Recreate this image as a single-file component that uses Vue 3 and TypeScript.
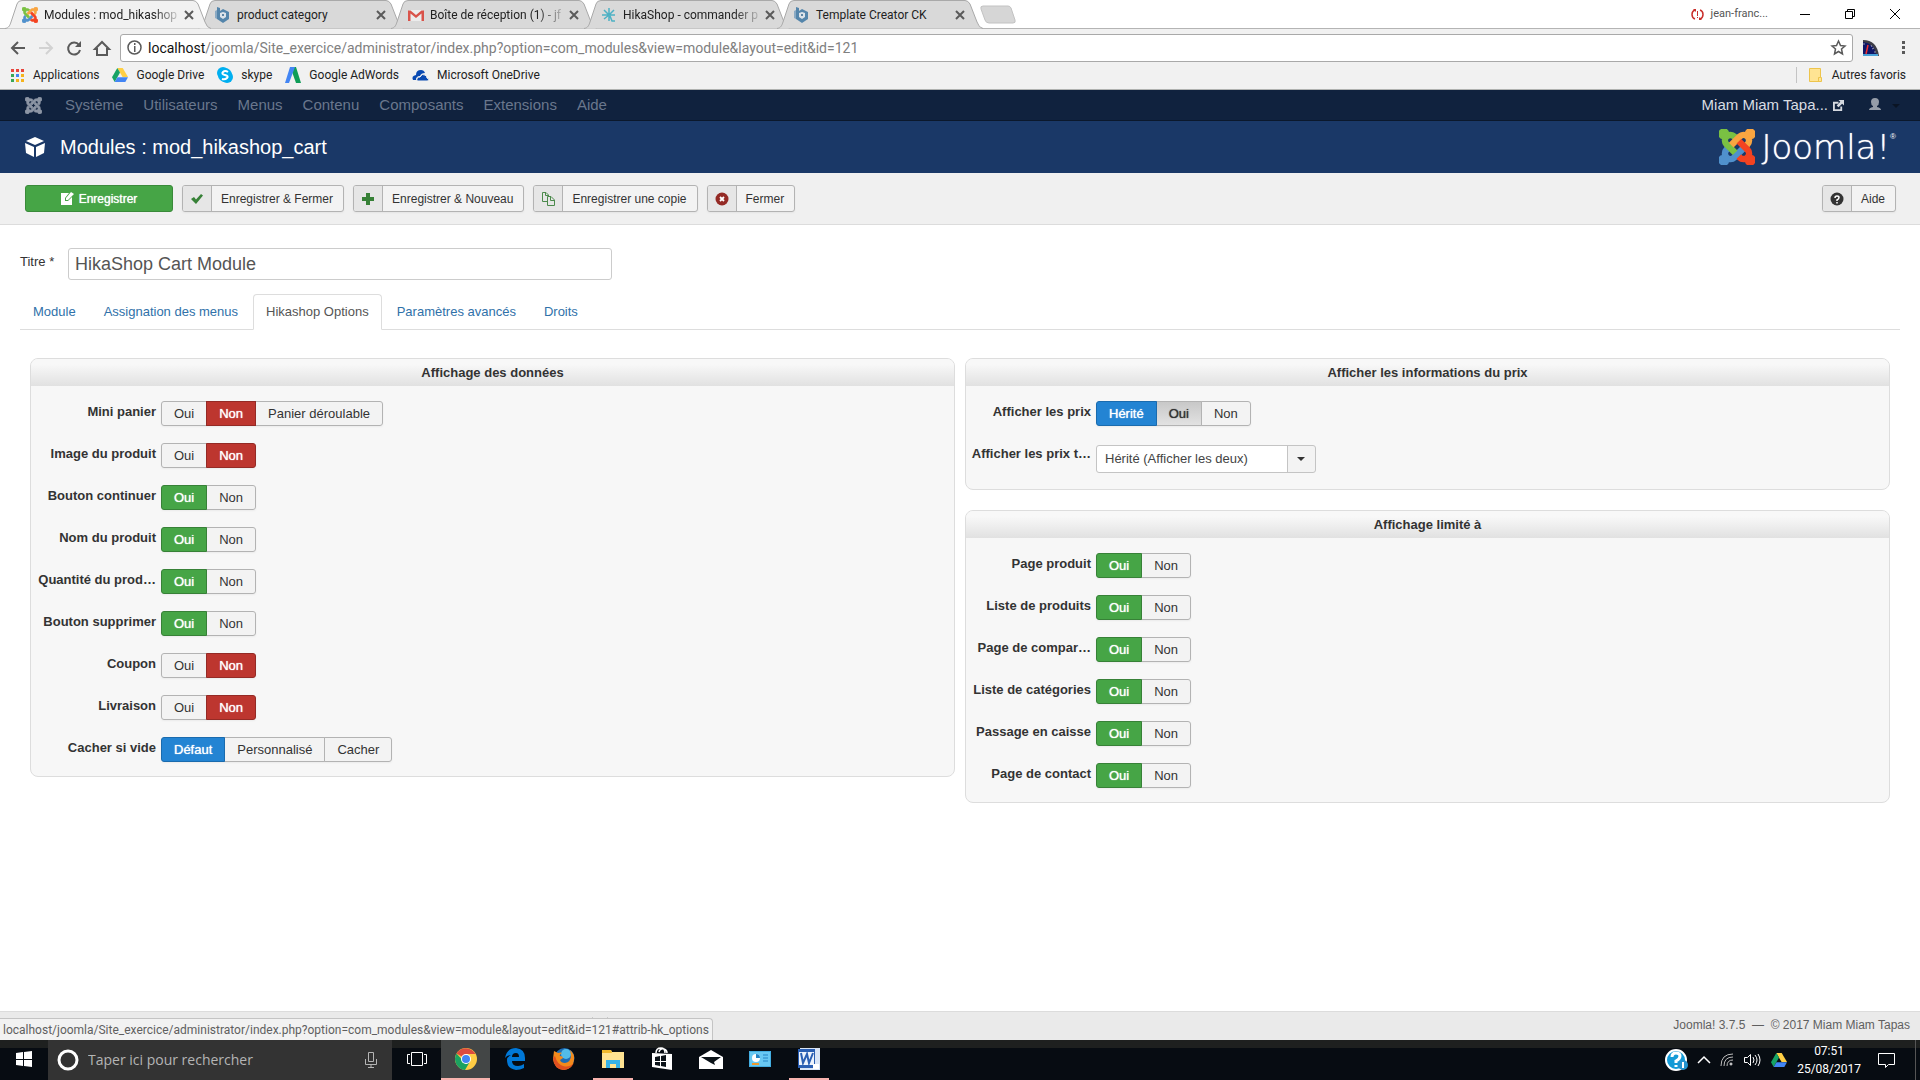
<script setup lang="ts">
import { reactive, ref } from 'vue'

type Tone = 'green' | 'red' | 'blue'
interface Option { text: string; tone: Tone; held?: boolean }
interface Field { id: string; label: string; options: Option[]; value: string }

const oui: Option = { text: 'Oui', tone: 'green' }
const non: Option = { text: 'Non', tone: 'red' }

const dataFields = reactive<Field[]>([
  { id: 'mini', label: 'Mini panier', options: [oui, non, { text: 'Panier déroulable', tone: 'green' }], value: 'Non' },
  { id: 'image', label: 'Image du produit', options: [oui, non], value: 'Non' },
  { id: 'continuer', label: 'Bouton continuer', options: [oui, non], value: 'Oui' },
  { id: 'nom', label: 'Nom du produit', options: [oui, non], value: 'Oui' },
  { id: 'quantite', label: 'Quantité du prod…', options: [oui, non], value: 'Oui' },
  { id: 'supprimer', label: 'Bouton supprimer', options: [oui, non], value: 'Oui' },
  { id: 'coupon', label: 'Coupon', options: [oui, non], value: 'Non' },
  { id: 'livraison', label: 'Livraison', options: [oui, non], value: 'Non' },
  {
    id: 'vide',
    label: 'Cacher si vide',
    options: [{ text: 'Défaut', tone: 'blue' }, { text: 'Personnalisé', tone: 'green' }, { text: 'Cacher', tone: 'green' }],
    value: 'Défaut',
  },
])

const priceFields = reactive<Field[]>([
  {
    id: 'prix',
    label: 'Afficher les prix',
    options: [{ text: 'Hérité', tone: 'blue' }, { text: 'Oui', tone: 'green', held: true }, non],
    value: 'Hérité',
  },
])

const limitFields = reactive<Field[]>(
  ['Page produit', 'Liste de produits', 'Page de compar…', 'Liste de catégories', 'Passage en caisse', 'Page de contact']
    .map((label, i) => ({ id: 'limite' + i, label, options: [oui, non], value: 'Oui' })),
)

const title = ref('HikaShop Cart Module')
const taxMode = ref('inherit')

const browserTabs = [
  { icon: 'joomla', text: 'Modules : mod_hikashop', fade: true },
  { icon: 'ck', text: 'product category', fade: false },
  { icon: 'gmail', text: 'Boîte de réception (1) - jf', fade: true },
  { icon: 'hika', text: 'HikaShop - commander p', fade: true },
  { icon: 'ck', text: 'Template Creator CK', fade: false },
]
const menus = ['Système', 'Utilisateurs', 'Menus', 'Contenu', 'Composants', 'Extensions', 'Aide']
const tools = [
  { icon: 'check', text: 'Enregistrer & Fermer' },
  { icon: 'plus', text: 'Enregistrer & Nouveau' },
  { icon: 'copy', text: 'Enregistrer une copie' },
  { icon: 'cancel', text: 'Fermer' },
]
const sections = ['Module', 'Assignation des menus', 'Hikashop Options', 'Paramètres avancés', 'Droits']
</script>

<template>
  <div class="screen">
    <svg class="defs" width="0" height="0" aria-hidden="true">
      <defs>
        <path id="arm" d="M16.7 14.8l-2.5 2.5-2.4 2.4-.4.4c-1.4 1.4-3.3 1.8-5.1 1.4-.3 1.4-1.6 2.5-3.1 2.5C1.400 24 0 22.500 0 20.800c0-1.500 1.100-2.800 2.500-3.100-.4-1.800 0-3.700 1.400-5.100l.2-.2 2.300 2.400-.2.200c-.8.800-.8 2 0 2.800.8.800 2 .800 2.800 0l.5-.5 2.300-2.400 2.500-2.500z" />
        <symbol id="i-joomla" viewBox="0 0 24 24">
          <g stroke-width="1">
            <use href="#arm" fill="#5091cd" stroke="#5091cd" />
            <use href="#arm" fill="#7ac143" stroke="#7ac143" transform="rotate(90 12 12)" />
            <use href="#arm" fill="#f9a541" stroke="#f9a541" transform="rotate(180 12 12)" />
            <use href="#arm" fill="#f44321" stroke="#f44321" transform="rotate(270 12 12)" />
          </g>
        </symbol>
        <symbol id="i-joomla-grey" viewBox="0 0 24 24">
          <g fill="#8c95a4" stroke="#8c95a4">
            <use href="#arm" />
            <use href="#arm" transform="rotate(90 12 12)" />
            <use href="#arm" transform="rotate(180 12 12)" />
            <use href="#arm" transform="rotate(270 12 12)" />
          </g>
        </symbol>
        <symbol id="i-ck" viewBox="0 0 16 16">
          <path d="M2 0l3 1v3l3-2 6 3v7l-6 4-6-4z" fill="#5485ab" />
          <path d="M5 6l3-1 3 1v4l-3 2-3-2z" fill="#dbe3ea" />
          <path d="M0 4l2-1v9l-2-1z" fill="#8aaac4" />
          <circle cx="8" cy="8" r="1" fill="#35678e" />
        </symbol>
        <symbol id="i-gmail" viewBox="0 0 16 16">
          <path d="M1 3h14v11H1z" fill="#ececec" />
          <path d="M0 3.500h2.500L8 8l5.500-4.500H16V14h-2.500V6.500L8 11 2.500 6.500V14H0z" fill="#d9534a" />
        </symbol>
        <symbol id="i-hika" viewBox="0 0 16 16">
          <path d="M8 8V1M8 8l5-5M8 8L3 3M8 8H1M8 8h6M8 8l-5 4M8 8v6M9 9l2 5h3" fill="none" stroke="#4db1c4" stroke-width="1.500" />
        </symbol>
        <symbol id="i-drive" viewBox="0 0 16 14">
          <path d="M5.300 0h5.400L16 9h-5.400z" fill="#ffcf45" />
          <path d="M5.300 0L8 4.600 2.700 14 0 9.300z" fill="#16a365" />
          <path d="M5.500 9.300H16L13.300 14H2.700z" fill="#4285f4" />
        </symbol>
        <symbol id="i-check" viewBox="0 0 14 14"><path d="M1 7l3-2 2 2.500L11 2l2 1.500L6 12z" fill="#378137" /></symbol>
        <symbol id="i-plus" viewBox="0 0 14 14"><path d="M5 1h4v4h4v4H9v4H5V9H1V5h4z" fill="#378137" /></symbol>
        <symbol id="i-copy" viewBox="0 0 14 14">
          <path d="M6 9.500H1.500v-9H5L7.500 3v1M4.500.500V3.500h3M6.500 4.500H10l3.500 3.500v5.500h-7zM9.500 4.500v4h4" fill="none" stroke="#4c8a4c" />
        </symbol>
        <symbol id="i-cancel" viewBox="0 0 14 14">
          <circle cx="7" cy="7" r="6.500" fill="#942a25" />
          <path d="M5 5l4 4M9 5L5 9" stroke="#fff" stroke-width="1.800" />
        </symbol>
      </defs>
    </svg>

    <header class="browser">
      <div class="strip">
        <div class="tabs" role="tablist">
          <button v-for="(t, i) in browserTabs" :key="i" class="btab" :class="{ on: i === 0 }" role="tab">
            <svg class="shape" viewBox="0 0 206 29" aria-hidden="true">
              <path d="M0 28.500C4 28 5 25 6 22L12 4Q13 .5 17 .5H188Q191 .5 193 4L200 22Q202 28 206 28.500" />
            </svg>
            <svg class="fav"><use :href="'#i-' + t.icon" /></svg>
            <span class="name" :class="{ fade: t.fade }">{{ t.text }}</span>
            <svg class="x" viewBox="0 0 8 8"><path d="M0 0l8 8M8 0L0 8" stroke="#5a5a5a" stroke-width="2" /></svg>
          </button>
          <button class="newtab" aria-label="Nouvel onglet">
            <svg viewBox="0 0 36 19"><path d="M3 1h25q2 0 3 2l4 12q1 3-2 3H9q-3 0-4-3L1 4q-1-3 2-3z" fill="#d6d6d6" stroke="#c2c2c2" /></svg>
          </button>
        </div>
        <div class="window">
          <svg width="13" height="11" viewBox="0 0 13 11"><path d="M4 1Q1 2 1 5.500T4 10M9 1q3 1 3 4.500T9 10" fill="none" stroke="#c9302c" stroke-width="1.500" /><path d="M2 0h3v3zM8 11h3L8 8zM6 2h1v5H6zM6 8h1v1H6z" fill="#c9302c" /></svg>
          <span class="profile">jean-franc...</span>
          <button aria-label="Réduire"><svg width="10" height="10"><path d="M0 5.500h10" stroke="#000" /></svg></button>
          <button aria-label="Restaurer"><svg width="10" height="10" fill="none" stroke="#000"><path d="M.5 2.500h7v7h-7zM2.500 2.500v-2h7v7h-2" /></svg></button>
          <button aria-label="Fermer la fenêtre"><svg width="10" height="10"><path d="M0 0l10 10M10 0L0 10" stroke="#000" /></svg></button>
        </div>
      </div>
      <div class="address">
        <button aria-label="Retour"><svg viewBox="0 0 16 16"><path d="M15 8H2M8 2L2 8l6 6" fill="none" stroke="#5a5a5a" stroke-width="2" /></svg></button>
        <button aria-label="Suivant"><svg viewBox="0 0 16 16"><path d="M1 8h13M8 2l6 6-6 6" fill="none" stroke="#d2d2d2" stroke-width="2" /></svg></button>
        <button aria-label="Actualiser"><svg viewBox="0 0 16 16"><path d="M13 5a6 6 0 1 0 1 5" fill="none" stroke="#5a5a5a" stroke-width="2" /><path d="M15 1v6H9z" fill="#5a5a5a" /></svg></button>
        <button class="home" aria-label="Accueil"><svg viewBox="0 0 16 16"><path d="M1 9l7-7 7 7h-2v6H3V9z" fill="none" stroke="#5a5a5a" stroke-width="2" /></svg></button>
        <div class="url">
          <svg width="15" height="15" viewBox="0 0 15 15"><circle cx="7.500" cy="7.500" r="6.500" fill="none" stroke="#5a5a5a" stroke-width="1.500" /><path d="M7 3h1.500v2H7zM7 6h1.500v6H7z" fill="#5a5a5a" /></svg>
          <span class="link"><b>localhost</b>/joomla/Site_exercice/administrator/index.php?option=com_modules&amp;view=module&amp;layout=edit&amp;id=121</span>
          <svg width="15" height="15" viewBox="0 0 15 15"><path d="M7.500 1l2 4.500 4.500.5-3.500 3 1 5-4-2.500-4 2.500 1-5L1 6l4.500-.5z" fill="none" stroke="#5a5a5a" stroke-width="1.500" /></svg>
        </div>
        <svg class="gauge" width="16" height="16" viewBox="0 0 16 16"><path d="M0 0q14 0 16 16H0z" fill="#3c3c46" /><path d="M0 2q11 1 13 12H0z" fill="#0e1668" /><path d="M0 14h15v2H0z" fill="#46a0d8" /><path d="M5 5L3 14" stroke="#f03030" stroke-width="1.500" /><path d="M8 5l1 2M11 8l-2 1M1 3v2M13 12h-2" stroke="#99a" /></svg>
        <button class="more" aria-label="Menu"><svg width="4" height="14"><path d="M0 0h3v3H0zM0 5h3v3H0zM0 10h3v3H0z" fill="#5a5a5a" /></svg></button>
      </div>
      <nav class="bookmarks">
        <a href="#"><svg width="14" height="14" viewBox="0 0 14 14"><path d="M0 1h3v3H0zM5 1h3v3H5zM10 1h3v3h-3z" fill="#e8453c" /><path d="M0 6h3v3H0z" fill="#3aa757" /><path d="M5 6h3v3H5z" fill="#4285f4" /><path d="M10 6h3v3h-3zM5 11h3v3H5zM10 11h3v3h-3z" fill="#f5b31c" /><path d="M0 11h3v3H0z" fill="#3aa757" /></svg>Applications</a>
        <a href="#"><svg width="16" height="14"><use href="#i-drive" /></svg>Google Drive</a>
        <a href="#"><svg width="16" height="16" viewBox="0 0 16 16"><circle cx="6" cy="6" r="6" fill="#00aff0" /><circle cx="10" cy="10" r="6" fill="#00aff0" /><circle cx="8" cy="8" r="7" fill="#00aff0" /><path d="M11 5Q8 3 6 5t2 3 2 3-5 1" fill="none" stroke="#fff" stroke-width="2" /></svg>skype</a>
        <a href="#"><svg width="16" height="16" viewBox="0 0 16 16"><path d="M7 0h4l5 16h-5L6 2z" fill="#0f9d58" /><path d="M5 0h5L4 16H0z" fill="#4285f4" /></svg>Google AdWords</a>
        <a href="#"><svg width="17" height="12" viewBox="0 0 17 12"><path d="M1 11q-2-4 3-5 0-5 5-5 3 0 4 3-4 0-5 3-4 0-4 4z" fill="#094ab2" /><path d="M5 12q-1-4 3-4 2-4 5-2 2 1 2 3 3 1 1 3z" fill="#094ab2" stroke="#f1f1f1" /></svg>Microsoft OneDrive</a>
        <a class="others" href="#"><svg width="13" height="14" viewBox="0 0 13 14"><path d="M.5.500h11v9h1v4H.500z" fill="#ffe493" stroke="#edc44c" /><path d="M9.500 13V9.500h2" fill="none" stroke="#edc44c" /></svg>Autres favoris</a>
      </nav>
    </header>

    <nav class="adminbar">
      <a class="brand" href="#" aria-label="Joomla"><svg width="17" height="17"><use href="#i-joomla-grey" /></svg></a>
      <a v-for="m in menus" :key="m" href="#">{{ m }}</a>
      <div class="user">
        <a class="site" href="#">Miam Miam Tapa...
          <svg width="11" height="11" viewBox="0 0 12 12"><path d="M6 3H1v8h8V7" fill="none" stroke="#d5d9e0" stroke-width="2" /><path d="M6 0h6v6l-2-2-4 4-2-2 4-4z" fill="#d5d9e0" /></svg>
        </a>
        <button aria-label="Utilisateur"><svg width="31" height="14" viewBox="0 0 31 14"><path d="M6 0q4 0 4 4 0 3-2 4v1q4 1 4 3H0q0-2 4-3V8Q2 7 2 4q0-4 4-4z" fill="#959da9" /><path d="M23 6h8l-4 4z" fill="#0a1424" /></svg></button>
      </div>
    </nav>

    <div class="titlebar">
      <svg width="20" height="20" viewBox="0 0 20 20"><path d="M10 0l9 4-9 4-9-4zM0 6l9 4v10l-8-4zM20 6l-9 4v10l8-4z" fill="#fff" /></svg>
      <h1>Modules : mod_hikashop_cart</h1>
      <div class="logo">
        <svg width="36" height="36"><use href="#i-joomla" /></svg>
        <span>Joomla!</span><sup>®</sup>
      </div>
    </div>

    <div class="toolbar">
      <button class="save">
        <svg width="13" height="13" viewBox="0 0 13 13"><path d="M0 1h8L4 6v3h3l4-4v8H0z" fill="#fff" /><path d="M5 8V6l5-6 3 2-6 6z" fill="#fff" /></svg>
        Enregistrer
      </button>
      <button v-for="t in tools" :key="t.text" class="tool"><span class="ico"><svg width="14" height="14"><use :href="'#i-' + t.icon" /></svg></span><span class="txt">{{ t.text }}</span></button>
      <button class="tool help"><span class="ico"><svg width="14" height="14" viewBox="0 0 14 14"><circle cx="7" cy="7" r="6.500" fill="#333" /><path d="M5 6q0-2 2-2t2 1.500-2 2.500v1M7 10v1.500" fill="none" stroke="#fff" stroke-width="1.500" /></svg></span><span class="txt">Aide</span></button>
    </div>

    <main>
      <div class="titlefield">
        <label for="titre">Titre *</label>
        <input id="titre" v-model="title" type="text">
      </div>
      <nav class="sections">
        <a v-for="s in sections" :key="s" href="#" :class="{ on: s === 'Hikashop Options' }">{{ s }}</a>
      </nav>
      <div class="columns">
        <div class="column">
          <section class="panel">
            <h2>Affichage des données</h2>
            <div v-for="f in dataFields" :key="f.id" class="row">
              <span :id="f.id" class="lab">{{ f.label }}</span>
              <div class="group" role="radiogroup" :aria-labelledby="f.id">
                <label v-for="o in f.options" :key="o.text" :class="[f.value === o.text && o.tone]">
                  <input v-model="f.value" type="radio" :name="f.id" :value="o.text">{{ o.text }}
                </label>
              </div>
            </div>
          </section>
        </div>
        <div class="column">
          <section class="panel">
            <h2>Afficher les informations du prix</h2>
            <div v-for="f in priceFields" :key="f.id" class="row">
              <span :id="f.id" class="lab">{{ f.label }}</span>
              <div class="group" role="radiogroup" :aria-labelledby="f.id">
                <label v-for="o in f.options" :key="o.text" :class="[f.value === o.text && o.tone, { held: o.held }]">
                  <input v-model="f.value" type="radio" :name="f.id" :value="o.text">{{ o.text }}
                </label>
              </div>
            </div>
            <div class="row drop">
              <label class="lab" for="taxes">Afficher les prix t…</label>
              <div class="select">
                <select id="taxes" v-model="taxMode"><option value="inherit">Hérité (Afficher les deux)</option></select>
                <svg width="8" height="4" viewBox="0 0 8 4"><path d="M0 0h8L4 4z" fill="#333" /></svg>
              </div>
            </div>
          </section>
          <section class="panel">
            <h2>Affichage limité à</h2>
            <div v-for="f in limitFields" :key="f.id" class="row">
              <span :id="f.id" class="lab">{{ f.label }}</span>
              <div class="group" role="radiogroup" :aria-labelledby="f.id">
                <label v-for="o in f.options" :key="o.text" :class="[f.value === o.text && o.tone]">
                  <input v-model="f.value" type="radio" :name="f.id" :value="o.text">{{ o.text }}
                </label>
              </div>
            </div>
          </section>
        </div>
      </div>
    </main>

    <footer class="status">
      <svg width="620" height="8" viewBox="0 0 620 8" aria-hidden="true"><path d="M106 8q1-3 5-3h8q4 0 5 3zM260 8q1-3 5-3h8q4 0 5 3zM385 8q1-3 5-3h8q4 0 5 3z" fill="#8b8b8b" /><path d="M592 5l4 2M608 5l-4 2" stroke="#666" /></svg>
      <span>Joomla! 3.7.5 &nbsp;—&nbsp; © 2017 Miam Miam Tapas</span>
      <div class="bubble">localhost/joomla/Site_exercice/administrator/index.php?option=com_modules&amp;view=module&amp;layout=edit&amp;id=121#attrib-hk_options</div>
    </footer>

    <div class="taskbar">
      <button class="start" aria-label="Démarrer"><svg width="16" height="16" viewBox="0 0 16 16"><path d="M0 2l7-1v7H0zM8 1l8-1v8H8zM0 9h7v6l-7-1zM8 9h8v7l-8-1z" fill="#fff" /></svg></button>
      <div class="search">
        <svg width="22" height="22" viewBox="0 0 22 22"><circle cx="11" cy="11" r="9" fill="none" stroke="#fff" stroke-width="3" /></svg>
        <input type="text" placeholder="Taper ici pour rechercher" aria-label="Taper ici pour rechercher">
        <svg width="12" height="16" viewBox="0 0 12 16"><path d="M3.500.500h5v9h-5zM.500 7v5.500h11V7M6 12.500v3M3 15.500h6" fill="none" stroke="#b5b5b5" /></svg>
      </div>
      <button class="app" aria-label="Vue des tâches"><svg width="20" height="15" viewBox="0 0 20 15"><path d="M4.500.500h11v13h-11zM3 2.500H.500v9H3M17 2.500h2.500v9H17" fill="none" stroke="#fff" /></svg></button>
      <button class="app current" aria-label="Chrome"><svg width="22" height="22" viewBox="0 0 22 22"><circle cx="11" cy="11" r="11" fill="#fc4" /><path d="M11 11L1.500 5.500A11 11 0 0 1 20.500 6H11z" fill="#dd4b3e" /><path d="M1.500 5.500A11 11 0 0 0 10 22l5-8.500-4 2.500z" fill="#1ba261" /><circle cx="11" cy="11" r="5" fill="#fff" /><circle cx="11" cy="11" r="4" fill="#4285f4" /></svg></button>
      <button class="app" aria-label="Edge"><svg width="20" height="22" viewBox="0 0 20 22"><path d="M0 10Q2 0 11 0q9 1 9 10v3H7q0 5 6 5 3 0 6-2v4q-4 2-8 2-9-1-9-10 0-3 4-5-4 0-6 3zM7 9h7q0-4-3-4-4 0-4 4z" fill="#0078d7" /></svg></button>
      <button class="app" aria-label="Firefox"><svg width="22" height="22" viewBox="0 0 22 22"><circle cx="11.500" cy="10" r="10" fill="#1e6cb4" /><circle cx="13" cy="6" r="5" fill="#52bce8" /><path d="M1 3l4 2q3-1 4 0-3 2-2 3 3 0 3 2l-3 2q1 3 5 3 6-1 6-8l-1-5q5 4 4 10-1 9-10 10Q1 21 0 11z" fill="#f28a1c" /><path d="M0 10q1 11 10 12 7 0 11-7-5 5-11 3T2 8z" fill="#df5020" /></svg></button>
      <button class="app open" aria-label="Explorateur"><svg width="22" height="19" viewBox="0 0 22 19"><path d="M0 0h9l1 2h12v16H0z" fill="#ffe391" /><path d="M0 0h9l1 3H0z" fill="#f0b92e" /><path d="M4 10h14v8h-4v-4H8v4H4z" fill="#37b2e6" /></svg></button>
      <button class="app" aria-label="Store"><svg width="22" height="24" viewBox="0 0 22 24"><path d="M1 6l20 1v16L1 20z" fill="#fff" /><path d="M5 6Q5 1 10 1q4 0 4 5M8 5q1-4 5-3 3 1 3 4" fill="none" stroke="#fff" stroke-width="1.500" /><path d="M4 10l5-1v5H4zM10 9l5-1v6h-5zM4 15h5v4l-5-1zM10 15h5v5l-5-1z" fill="#0b1218" /></svg></button>
      <button class="app" aria-label="Courrier"><svg width="24" height="19" viewBox="0 0 24 19"><path d="M0 7l12-7 12 7v12H0z" fill="#fff" /><path d="M2 7h20l-7 5 1 3-4-2z" fill="#0b1218" /></svg></button>
      <button class="app" aria-label="Panneau de configuration"><svg width="22" height="16" viewBox="0 0 22 16"><path d="M0 0h22v16H0z" fill="#43aee2" /><path d="M1 1h20v14H1z" fill="#68c8f2" /><circle cx="7" cy="7" r="4" fill="#fff" /><path d="M7 7V3a4 4 0 0 1 4 4z" fill="#2384c6" /><path d="M14 4h5M14 7h5M14 10h5" stroke="#2384c6" /><path d="M3 13h7" stroke="#ee9a2e" stroke-width="2" /></svg></button>
      <button class="app open" aria-label="Word"><svg width="22" height="22" viewBox="0 0 22 22"><path d="M2 0h20v22H2z" fill="#d9e5f6" /><path d="M0 1h17v19H0z" fill="#2a5fb3" /><path d="M1 4h15v13H1z" fill="#edf3fc" /><path d="M3 5l2 10 4-9 2 9 4-10" fill="none" stroke="#2a5fb3" stroke-width="2" /><path d="M15 16h6v5h-6z" fill="#fff" /></svg></button>
      <div class="tray">
        <svg width="23" height="22" viewBox="0 0 23 22"><circle cx="11" cy="11" r="10" fill="#149bd7" stroke="#fff" stroke-width="2" /><path d="M7 8q0-4 4-4t4 3-4 5v2M11 16v2" fill="none" stroke="#fff" stroke-width="3" /><circle cx="18" cy="16" r="5" fill="#2493ce" /><path d="M18 13v6" stroke="#fff" stroke-width="2" /></svg>
        <svg width="12" height="8" viewBox="0 0 12 8"><path d="M0 7l6-6 6 6" fill="none" stroke="#fff" stroke-width="1.500" /></svg>
        <svg width="14" height="14" viewBox="0 0 14 14" fill="none" stroke="#bbb"><path d="M1 13Q1 1 13 1M4 13q0-9 9-9M7 13q0-6 6-6" /><circle cx="11" cy="11" r="1" stroke="#fff" /></svg>
        <svg width="17" height="14" viewBox="0 0 17 14" fill="none" stroke="#fff"><path d="M.500 4.500h3l3-3v11l-3-3h-3zM9 4q2 3 0 6M11 2q4 5 0 10M14 1q4 6 0 12" /></svg>
        <svg width="16" height="14"><use href="#i-drive" /></svg>
        <div class="clock"><span>07:51</span><span>25/08/2017</span></div>
        <svg width="17" height="17" viewBox="0 0 17 17"><path d="M.500 1.500h16v11h-6l-3 3v-3h-7z" fill="none" stroke="#fff" /></svg>
      </div>
    </div>
  </div>
</template>

<style>
body { margin: 0; background: #fff; }
</style>

<style scoped>
.screen { display: flex; flex-direction: column; min-height: 100vh; font: 13px/18px "Liberation Sans", Arial, sans-serif; color: #333; }
.defs { position: absolute; }
* { box-sizing: border-box; }
svg { display: block; flex: none; overflow: visible; }
a { text-decoration: none; color: inherit; }
button { font: inherit; color: inherit; border: 0; padding: 0; background: none; }

.browser { font: 12px/16px Roboto, "Open Sans", sans-serif; background: #f1f1f1; border-bottom: 1px solid #b0b2b0; color: #222; }
.strip { display: flex; justify-content: space-between; height: 29px; background: #fff; border-bottom: 1px solid #b4b4b4; }
.tabs { display: flex; padding-left: 5px; }
.btab { position: relative; display: flex; align-items: center; width: 206px; height: 29px; margin-right: -13px; padding: 0 15px 0 17px; gap: 6px; text-align: left; }
.btab .shape { position: absolute; left: 0; top: 0; width: 206px; height: 29px; fill: #d9d9d9; stroke: #a9a9a9; }
.btab.on { z-index: 1; }
.btab.on .shape { fill: #f1f1f1; }
.fav { position: relative; width: 16px; height: 16px; }
.name { position: relative; flex: 1; white-space: nowrap; }
.name.fade { mask-image: linear-gradient(to right, #000 82%, #0003); }
.x { position: relative; width: 8px; height: 8px; margin: 0 4px 0 2px; }
.newtab { align-self: center; margin-left: 10px; }
.newtab svg { width: 36px; height: 19px; }
.window { display: flex; align-items: center; padding-right: 20px; }
.profile { margin: 0 32px 0 7px; font-size: 11px; color: #555; }
.window button + button { margin-left: 35px; }
.address { display: flex; align-items: center; height: 37px; padding: 0 14px 0 10px; }
.address > button svg { width: 16px; height: 16px; }
.address > button { margin-right: 12px; }
.address > .home { margin-right: 10px; }
.url { display: flex; align-items: center; flex: 1; height: 28px; padding: 0 6px; background: #fff; border: 1px solid #a9a9a9; border-radius: 3px; }
.link { flex: 1; margin-left: 6px; font-size: 14px; color: #808080; white-space: nowrap; }
.link b { font-weight: 400; color: #111; }
.gauge { margin: 0 23px 0 10px; }
.address > .more { margin: 0; }
.address > .more svg { width: 4px; height: 14px; }
.bookmarks { display: flex; align-items: center; height: 23px; padding: 0 14px 6px 11px; gap: 13px; }
.bookmarks a { display: flex; align-items: center; gap: 8px; }
.bookmarks .others { margin-left: auto; padding-left: 12px; border-left: 1px solid #c4c4c4; gap: 10px; }

.adminbar { display: flex; align-items: center; height: 31px; padding: 0 20px 0 25px; background: #10223e; border-bottom: 1px solid #0b182c; gap: 20px; font-size: 15px; color: #6a778d; }
.adminbar .brand { margin-right: 3px; }
.user { display: flex; align-items: center; margin-left: auto; gap: 25px; }
.site { display: flex; align-items: center; gap: 5px; color: #d9dde3; }
.titlebar { display: flex; align-items: center; height: 52px; padding: 0 24px 0 25px; background: #1a3867; color: #fff; }
.titlebar h1 { margin: 0 0 0 15px; font-size: 20px; font-weight: 400; line-height: 24px; }
.logo { display: flex; align-items: center; margin-left: auto; gap: 6px; }
.logo span { font: 200 34px/36px "DejaVu Sans", sans-serif; text-shadow: 0 0 1px #fff; }
.logo sup { align-self: flex-start; margin-left: -6px; font-size: 8px; line-height: 16px; }

.toolbar { display: flex; align-items: center; height: 52px; padding: 0 24px 0 25px; background: #f0f0f0; border-bottom: 1px solid #dcdcdc; gap: 9px; font-size: 12px; }
.save { display: flex; align-items: center; justify-content: center; gap: 5px; width: 148px; height: 27px; background: #46a546; border: 1px solid #3a8a3a; border-radius: 3px; color: #fff; text-shadow: 0 0 1px #fff; }
.tool { display: flex; align-items: stretch; height: 27px; border: 1px solid #b3b3b3; border-radius: 3px; background: #f3f3f3; box-shadow: 0 1px 2px #0000000d; overflow: hidden; }
.ico { display: flex; align-items: center; justify-content: center; width: 29px; background: #e6e6e6; border-right: 1px solid #b3b3b3; }
.txt { padding: 0 10px 0 9px; line-height: 26px; }
.help { margin-left: auto; }

main { flex: 1; padding: 23px 20px 0; }
.titlefield { display: flex; align-items: center; }
.titlefield label { width: 48px; padding-bottom: 4px; }
.titlefield input { width: 544px; height: 32px; padding: 0 6px; border: 1px solid #ccc; border-radius: 3px; font: 18px/24px "Liberation Sans", Arial, sans-serif; color: #555; background: #fff; }
.sections { display: flex; margin-top: 14px; border-bottom: 1px solid #ddd; }
.sections a { height: 36px; margin: 0 2px -1px 0; padding: 8px 12px; border: 1px solid transparent; border-radius: 4px 4px 0 0; color: #3071a9; }
.sections .on { border-color: #ddd; border-bottom-color: #fff; background: #fff; color: #555; }
.columns { display: grid; grid-template-columns: 1fr 1fr; align-items: start; gap: 10px; padding: 28px 10px 20px; }
.column { display: flex; flex-direction: column; gap: 20px; }
.panel { padding-bottom: 14px; border: 1px solid #ddd; border-radius: 8px; background: #f7f7f7; overflow: hidden; }
.panel h2 { height: 27px; margin: 0 0 15px; font-size: 13px; line-height: 27px; text-align: center; background: linear-gradient(#f8f8f8 20%, #e1e1e1); }
.row { display: flex; align-items: flex-start; gap: 5px; }
.row + .row { margin-top: 17px; }
.lab { width: 125px; font-weight: 700; line-height: 21px; text-align: right; white-space: nowrap; }
.group { display: flex; height: 25px; border-radius: 3px; box-shadow: 0 1px 2px #0000000d; }
.group label { position: relative; padding: 0 12px; border: 1px solid #b3b3b3; background: #f3f3f3; line-height: 23px; }
.group label + label { margin-left: -1px; }
.group label:first-child { border-radius: 3px 0 0 3px; }
.group label:last-child { border-radius: 0 3px 3px 0; }
.group input { position: absolute; inset: 0; margin: 0; opacity: 0; }
.group .green, .group .red, .group .blue { z-index: 1; color: #fff; text-shadow: 0 0 1px #fff; }
.group .green { background: #46a546; border-color: #378137; }
.group .red { background: #bd362f; border-color: #942a25; }
.group .blue { background: #2384d3; border-color: #1a6bae; }
.group .held { background: linear-gradient(#c8c8c8, #e2e2e2); text-shadow: 0 0 1px #333; }
.drop { padding-bottom: 2px; }
.select { position: relative; width: 220px; height: 28px; margin-top: 2px; }
.select select { appearance: none; width: 100%; height: 28px; padding: 0 8px; border: 1px solid #c4c4c4; border-radius: 3px; font: inherit; color: #444; background: linear-gradient(to right, #fff 190px, #c4c4c4 190px 191px, #f3f3f3 191px); }
.select svg { position: absolute; right: 11px; top: 12px; pointer-events: none; }

.status { position: relative; display: flex; justify-content: space-between; height: 29px; padding-right: 10px; background: #eaeaea; border-top: 1px solid #dcdcdc; font-size: 12px; line-height: 27px; color: #5f5f5f; }
.status > svg { margin-top: 1px; }
.bubble { position: absolute; left: 0; bottom: 0; height: 22px; padding: 0 3px; background: #f2f2f2; border: 1px solid #c4c4c4; border-width: 1px 1px 0 0; border-radius: 0 4px 0 0; font: 12px/22px Roboto, "Open Sans", sans-serif; white-space: nowrap; }

.taskbar { display: flex; height: 40px; background: linear-gradient(#1e201f 8px, #070c12 8px); font: 12px/18px Roboto, "Open Sans", sans-serif; color: #fff; }
.start, .app { display: flex; align-items: center; justify-content: center; width: 49px; border-bottom: 2px solid transparent; }
.start { width: 48px; }
.search { display: flex; align-items: center; width: 344px; padding: 0 15px 0 9px; background: #333; }
.search input { flex: 1; min-width: 0; margin-left: 9px; padding: 0; border: 0; background: none; font: 14px/20px "Open Sans", "Noto Sans", sans-serif; color: #fff; }
.search input::placeholder { color: #b5b5b5; opacity: 1; }
.current { background: #434646; border-bottom-color: #f7b3ae; }
.app.open { background: linear-gradient(#f7b3ae, #f7b3ae) bottom / 40px 2px no-repeat border-box; }
.tray { display: flex; align-items: center; margin-left: auto; margin-right: 4px; padding-right: 20px; gap: 10px; border-right: 1px solid #555; }
.clock { display: flex; flex-direction: column; align-items: center; margin-right: 7px; }
</style>
